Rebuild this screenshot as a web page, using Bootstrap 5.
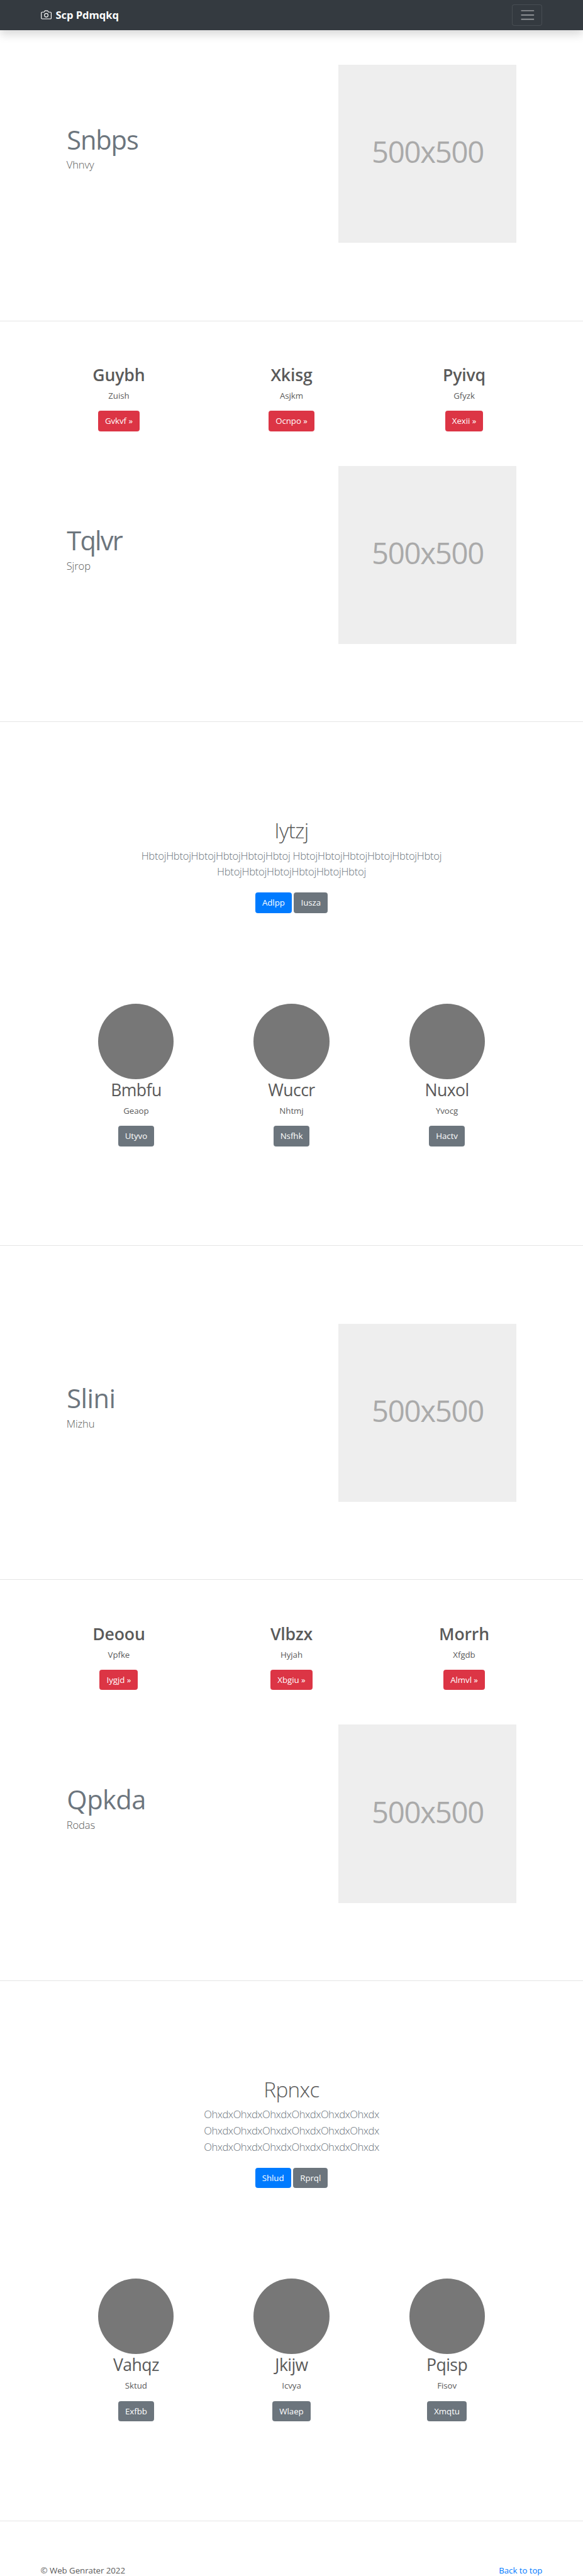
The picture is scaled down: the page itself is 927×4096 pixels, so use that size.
<!DOCTYPE html>
<html lang="en">
<head>
<meta charset="utf-8">
<meta name="viewport" content="width=device-width, initial-scale=1">
<title>Scp Pdmqkq</title>
<link href="https://cdn.jsdelivr.net/npm/bootstrap@5.3.0/dist/css/bootstrap.min.css" rel="stylesheet">
<script src="https://cdn.jsdelivr.net/npm/bootstrap@5.3.0/dist/js/bootstrap.bundle.min.js" defer></script>
<style>
html { font-size: 13.728px; }
body {
  font-family: "Open Sans", sans-serif;
  color: #5a5a5a;
  background: #fff;
  font-size: .97rem;
  line-height: 1.5rem;
  letter-spacing: -.004em;
}
p { margin-bottom: 1rem; }
.page-box { max-width: 60rem; --bs-gutter-x: 1.875rem; }
.page-box .row { --bs-gutter-x: 1.875rem; }

.top-bar { height: 3.5rem; padding: 0; background: #343a40; box-shadow: 0 .5rem 1rem rgba(0,0,0,.15); }
.top-bar .navbar-brand { font-size: 1.213rem; line-height: 1.875rem; font-weight: 700; color: #fff; padding: 0; gap: .5rem; letter-spacing: -.006em; }
.top-bar .navbar-brand svg { width: 1.25rem; height: 1.25rem; }
.top-bar .navbar-toggler { padding: calc(.3125rem - 1px) calc(.8125rem - 1px); border: 1px solid rgba(255,255,255,.1); border-radius: .25rem; line-height: 1; height: 2.5rem; }
.top-bar .navbar-toggler svg { width: 1.875rem; height: 1.875rem; display: block; }

/* section divider */
.rule { border: 0; border-top: 1px solid rgba(0,0,0,.1); opacity: 1; margin: 0 0 -.01rem; }

.feature { padding: 4rem 3rem 8.99rem; }
.feature-late { padding-top: 9rem; }
.feature h2 { font-size: 3.03rem; line-height: 3.125rem; font-weight: 400; color: #6c757d; margin: 7rem 0 .38rem; padding: .12rem 0 0 .05rem; }
.feature p { font-size: 1.2125rem; line-height: 1.875rem; font-weight: 300; margin: 0; padding-top: .04rem; letter-spacing: -.008em; }
.photo { aspect-ratio: 1; background: #eee; color: #aaa; font-size: 3.45rem; line-height: 1; padding: 0 0 .5rem .05rem; letter-spacing: -.028em; }

.trio { padding-top: 5rem; }
.trio h2, .people h2 { font-size: 1.94rem; line-height: 2.4rem; margin: 0 0 .43rem; padding-top: .07rem; }
.trio h2 { font-weight: 600; letter-spacing: -.006em; }
.people h2 { font-weight: 400; letter-spacing: -.022em; }

.btn { --bs-btn-font-size: .97rem; --bs-btn-border-radius: .25rem; height: 2.375rem; padding: .375rem calc(.8125rem - 1px); line-height: calc(1.625rem - 2px); vertical-align: top; }
.btn-danger { --bs-btn-bg: #dc3545; --bs-btn-border-color: #dc3545; }
.btn-primary { --bs-btn-bg: #007bff; --bs-btn-border-color: #007bff; }
.btn-secondary { --bs-btn-bg: #6c757d; --bs-btn-border-color: #6c757d; }

.hero { padding-top: 11rem; }
.hero h1 { font-size: 2.425rem; line-height: 3rem; font-weight: 300; margin: 0 0 .41rem; padding-top: .09rem; letter-spacing: -.02em; }
.hero .intro { font-size: 1.2125rem; line-height: 1.875rem; font-weight: 300; color: #6c757d; padding-top: .04rem; margin-bottom: .96rem; letter-spacing: -.0175em; }
.hero .actions { padding: .5rem 0; margin: 0; gap: .25rem; }

.people { padding: 10rem 3rem 11.48rem; }
.avatar { width: 8.75rem; height: 8.75rem; background: #777; }

footer { padding-top: 5rem; }
footer p { margin: 0; }
footer a { color: #007bff; text-decoration: none; }

.track-1 { letter-spacing: -.013em; }
.track-2 { letter-spacing: -.028em; }
.hero .track-3 { letter-spacing: -.0305em; }
.track-4 { letter-spacing: -.044em; }
</style>
</head>
<body>
<header class="navbar navbar-dark top-bar">
  <div class="container page-box">
    <a class="navbar-brand d-flex align-items-center m-0" href="#">
      <svg viewBox="0 0 24 24" fill="none" stroke="currentColor" stroke-width="1.6" stroke-linecap="round" stroke-linejoin="round" aria-hidden="true"><path d="M23 19a2 2 0 0 1-2 2H3a2 2 0 0 1-2-2V8a2 2 0 0 1 2-2h4l2-3h6l2 3h4a2 2 0 0 1 2 2z"/><circle cx="12" cy="13" r="4"/></svg>
      <span>Scp Pdmqkq</span>
    </a>
    <button class="navbar-toggler" type="button" aria-label="Toggle navigation">
      <svg viewBox="0 0 30 30" stroke="#999c9f" stroke-width="2" stroke-linecap="square" aria-hidden="true"><path d="M4 7h22M4 15h22M4 23h22"/></svg>
    </button>
  </div>
</header>

<main>
  <section class="container page-box">
    <div class="feature"><div class="row">
      <div class="col-7"><h2 class="track-2">Snbps</h2><p>Vhnvy</p></div>
      <div class="col-5"><div class="photo d-flex align-items-center justify-content-center">500x500</div></div>
    </div></div>
  </section>
  <hr class="rule">

  <section class="container page-box">
    <div class="row text-center trio">
      <div class="col-4"><h2>Guybh</h2><p>Zuish</p><a class="btn btn-danger" href="#">Gvkvf »</a></div>
      <div class="col-4"><h2>Xkisg</h2><p>Asjkm</p><a class="btn btn-danger" href="#">Ocnpo »</a></div>
      <div class="col-4"><h2>Pyivq</h2><p>Gfyzk</p><a class="btn btn-danger" href="#">Xexii »</a></div>
    </div>
    <div class="feature"><div class="row">
      <div class="col-7"><h2 class="track-4">Tqlvr</h2><p>Sjrop</p></div>
      <div class="col-5"><div class="photo d-flex align-items-center justify-content-center">500x500</div></div>
    </div></div>
  </section>
  <hr class="rule">

  <section class="container page-box text-center">
    <div class="row hero"><div class="col-8 mx-auto">
      <h1>Iytzj</h1>
      <p class="intro">HbtojHbtojHbtojHbtojHbtojHbtoj HbtojHbtojHbtojHbtojHbtojHbtoj HbtojHbtojHbtojHbtojHbtojHbtoj</p>
      <div class="actions d-flex justify-content-center"><a class="btn btn-primary" href="#">Adlpp</a><a class="btn btn-secondary" href="#">Iusza</a></div>
    </div></div>
    <div class="people"><div class="row">
      <div class="col-4"><div class="avatar rounded-circle mx-auto"></div><h2>Bmbfu</h2><p>Geaop</p><a class="btn btn-secondary" href="#">Utyvo</a></div>
      <div class="col-4"><div class="avatar rounded-circle mx-auto"></div><h2>Wuccr</h2><p>Nhtmj</p><a class="btn btn-secondary" href="#">Nsfhk</a></div>
      <div class="col-4"><div class="avatar rounded-circle mx-auto"></div><h2>Nuxol</h2><p>Yvocg</p><a class="btn btn-secondary" href="#">Hactv</a></div>
    </div></div>
  </section>
  <hr class="rule">

  <section class="container page-box">
    <div class="feature pt-0"><div class="row feature-late">
      <div class="col-7"><h2 class="track-1">Slini</h2><p>Mizhu</p></div>
      <div class="col-5"><div class="photo d-flex align-items-center justify-content-center">500x500</div></div>
    </div></div>
  </section>
  <hr class="rule">

  <section class="container page-box">
    <div class="row text-center trio">
      <div class="col-4"><h2>Deoou</h2><p>Vpfke</p><a class="btn btn-danger" href="#">Iygjd »</a></div>
      <div class="col-4"><h2>Vlbzx</h2><p>Hyjah</p><a class="btn btn-danger" href="#">Xbgiu »</a></div>
      <div class="col-4"><h2>Morrh</h2><p>Xfgdb</p><a class="btn btn-danger" href="#">Almvl »</a></div>
    </div>
    <div class="feature"><div class="row">
      <div class="col-7"><h2 class="track-1">Qpkda</h2><p>Rodas</p></div>
      <div class="col-5"><div class="photo d-flex align-items-center justify-content-center">500x500</div></div>
    </div></div>
  </section>
  <hr class="rule">

  <section class="container page-box text-center">
    <div class="row hero"><div class="col-8 mx-auto">
      <h1>Rpnxc</h1>
      <p class="intro track-3">OhxdxOhxdxOhxdxOhxdxOhxdxOhxdx OhxdxOhxdxOhxdxOhxdxOhxdxOhxdx OhxdxOhxdxOhxdxOhxdxOhxdxOhxdx</p>
      <div class="actions d-flex justify-content-center"><a class="btn btn-primary" href="#">Shlud</a><a class="btn btn-secondary" href="#">Rprql</a></div>
    </div></div>
    <div class="people"><div class="row">
      <div class="col-4"><div class="avatar rounded-circle mx-auto"></div><h2>Vahqz</h2><p>Sktud</p><a class="btn btn-secondary" href="#">Exfbb</a></div>
      <div class="col-4"><div class="avatar rounded-circle mx-auto"></div><h2>Jkijw</h2><p>Icvya</p><a class="btn btn-secondary" href="#">Wlaep</a></div>
      <div class="col-4"><div class="avatar rounded-circle mx-auto"></div><h2>Pqisp</h2><p>Fisov</p><a class="btn btn-secondary" href="#">Xmqtu</a></div>
    </div></div>
  </section>
  <hr class="rule">
</main>

<footer class="container page-box d-flex justify-content-between">
  <p>© Web Genrater 2022</p>
  <p><a href="#">Back to top</a></p>
</footer>
</body>
</html>
